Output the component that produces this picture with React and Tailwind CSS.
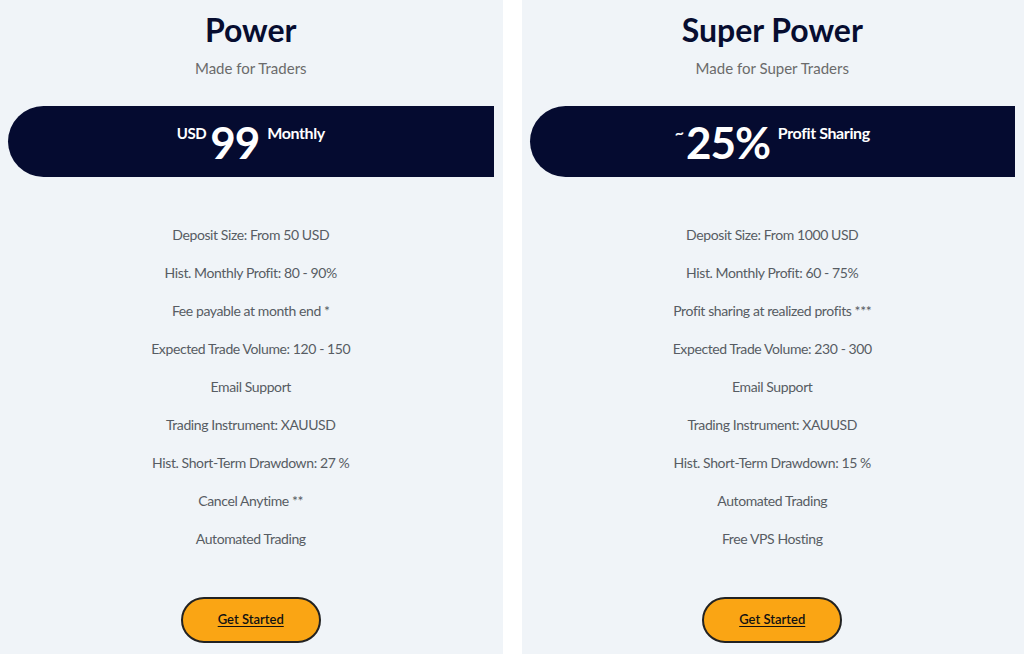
import React from 'react';

const PLANS = [
  {
    title: 'Power',
    subtitle: 'Made for Traders',
    prefix: 'USD',
    amount: '99',
    suffix: 'Monthly',
    features: [
      'Deposit Size: From 50 USD',
      'Hist. Monthly Profit: 80 - 90%',
      'Fee payable at month end *',
      'Expected Trade Volume: 120 - 150',
      'Email Support',
      'Trading Instrument: XAUUSD',
      'Hist. Short-Term Drawdown: 27 %',
      'Cancel Anytime **',
      'Automated Trading',
    ],
  },
  {
    title: 'Super Power',
    subtitle: 'Made for Super Traders',
    prefix: '~',
    amount: '25%',
    suffix: 'Profit Sharing',
    features: [
      'Deposit Size: From 1000 USD',
      'Hist. Monthly Profit: 60 - 75%',
      'Profit sharing at realized profits ***',
      'Expected Trade Volume: 230 - 300',
      'Email Support',
      'Trading Instrument: XAUUSD',
      'Hist. Short-Term Drawdown: 15 %',
      'Automated Trading',
      'Free VPS Hosting',
    ],
  },
];

const PlanCard = ({ plan }) => (
  <div className="bg-[#f0f4f8] h-[654px] flex flex-col items-center pt-[10px] pl-[8px] pr-[9px]">
    <h2 className="text-[32px] leading-[40px] font-bold text-[#070d30]">{plan.title}</h2>
    <p className="mt-[6px] text-[15px] leading-[24px] text-[#6b6b6b]">{plan.subtitle}</p>

    {/* Price banner */}
    <div className="mt-[26px] w-full h-[71px] bg-[#050b30] rounded-l-full flex items-center justify-center text-white">
      <div className="flex items-start">
        <span className={plan.prefix === '~' ? 'text-[16px] leading-[20px] font-bold mt-[3px] mr-[2px]' : 'text-[15px] leading-[20px] font-bold mt-[4px] mr-[4px] tracking-tight'}>
          {plan.prefix}
        </span>
        <span className="text-[44px] leading-[46px] font-bold tracking-tight">{plan.amount}</span>
        <span className="text-[16px] leading-[20px] font-bold ml-[8px] mt-[4px] tracking-tight">{plan.suffix}</span>
      </div>
    </div>

    {/* Features */}
    <ul className="mt-[39px] flex flex-col items-center text-[14px] tracking-[-0.4px] text-[#575c63]">
      {plan.features.map((f) => (
        <li key={f} className="h-[38px] leading-[38px]">{f}</li>
      ))}
    </ul>

    <button className="mt-[39px] w-[140px] h-[46px] rounded-full bg-[#faa514] border-2 border-[#222] text-[13px] font-semibold text-[#111] underline underline-offset-2">
      Get Started
    </button>
  </div>
);

export default function App() {
  return (
    <div className="w-[1024px] h-[654px] bg-white grid grid-cols-2 gap-[19px] overflow-hidden" style={{ fontFamily: 'Lato, "Open Sans", sans-serif' }}>
      {PLANS.map((p) => (
        <PlanCard key={p.title} plan={p} />
      ))}
    </div>
  );
}
